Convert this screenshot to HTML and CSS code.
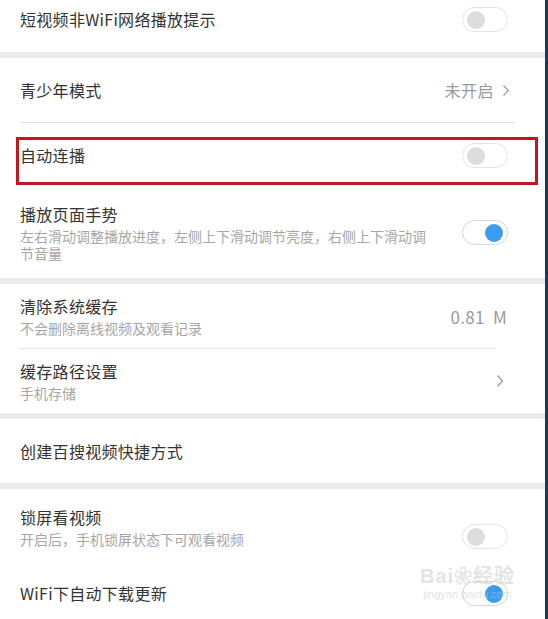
FILE: index.html
```html
<!DOCTYPE html>
<html lang="zh-CN">
<head>
  <meta charset="UTF-8">
  <title>设置</title>
  <link rel="stylesheet" href="styles.css">
</head>
<body>
  <div class="page">
    <div class="list">

      <!-- 播放提示 -->
      <div class="row first">
        <div class="text"><div class="title">短视频非WiFi网络播放提示</div></div>
        <span class="toggle"><span class="knob"></span></span>
      </div>

      <div class="band"></div>

      <div class="row">
        <div class="text"><div class="title">青少年模式</div></div>
        <span class="value">未开启<svg class="chev" width="8" height="13" viewBox="0 0 8 13"><polyline points="1.5,1.5 6.5,6.5 1.5,11.5" fill="none" stroke="#9a9a9a" stroke-width="1.2"/></svg></span>
      </div>
      <div class="line wide"></div>

      <div class="row mark">
        <div class="text"><div class="title">自动连播</div></div>
        <span class="toggle"><span class="knob"></span></span>
        <div class="redbox"></div>
      </div>

      <div class="row tall">
        <div class="text">
          <div class="title">播放页面手势</div>
          <div class="sub">左右滑动调整播放进度，左侧上下滑动调节亮度，右侧上下滑动调节音量</div>
        </div>
        <span class="toggle on"><span class="knob"></span></span>
      </div>

      <div class="band"></div>

      <!-- 缓存 -->
      <div class="row">
        <div class="text">
          <div class="title">清除系统缓存</div>
          <div class="sub">不会删除离线视频及观看记录</div>
        </div>
        <span class="value size">0.81&nbsp; M</span>
      </div>
      <div class="line short"></div>

      <div class="row">
        <div class="text">
          <div class="title">缓存路径设置</div>
          <div class="sub">手机存储</div>
        </div>
        <svg class="chev lone" width="8" height="14" viewBox="0 0 8 14"><polyline points="1.5,1.5 6.5,7 1.5,12.5" fill="none" stroke="#9a9a9a" stroke-width="1.2"/></svg>
      </div>

      <div class="band"></div>

      <div class="row">
        <div class="text"><div class="title">创建百搜视频快捷方式</div></div>
      </div>

      <div class="band"></div>

      <div class="row lock">
        <div class="text">
          <div class="title">锁屏看视频</div>
          <div class="sub">开启后，手机锁屏状态下可观看视频</div>
        </div>
        <span class="toggle low"><span class="knob"></span></span>
      </div>

      <div class="row last">
        <div class="text"><div class="title">WiFi下自动下载更新</div></div>
        <span class="toggle on"><span class="knob"></span></span>
        <div class="watermark">
          <div class="wm-top">Bai<span class="paw">❀</span>经验</div>
          <div class="wm-bottom">jingyan.baidu.com</div>
        </div>
      </div>

    </div>
  </div>
</body>
</html>
```

FILE: styles.css
```css
html, body { margin: 0; padding: 0; background: #fff; }
body { font-family: "Noto Sans CJK SC", "Noto Sans", sans-serif; color: #333; }

.page { width: 548px; height: 619px; overflow: hidden; box-sizing: border-box; border-right: 3px solid #1c3764; }
.list { margin-top: -14px; }

.row { position: relative; display: flex; align-items: center; height: 64px; padding: 0 37px 0 20px; box-sizing: border-box; }
.row.first { height: 66px; }
.row.tall { height: 91px; }
.row.lock { height: 74px; align-items: flex-start; padding-top: 17px; }
.row.last { height: 60px; }

.text { flex: 1; min-width: 0; }
.title { font-size: 16px; line-height: 22px; color: #333; letter-spacing: 0.3px; }
.sub { font-size: 14px; line-height: 17px; margin-top: 3px; color: #a6a6a6; width: 416px; }

.band { height: 6px; background: #ebebeb; }
.list > .band:first-of-type { height: 7px; }
.line { height: 1px; background: #e2e2e2; margin-left: 20px; }
.line.wide { margin-right: 30px; }
.line.short { margin-right: 49px; }

.value { font-size: 16px; color: #9a9a9a; display: flex; align-items: center; gap: 8px; margin-right: -2px; letter-spacing: 0.5px; }
.value.size { font-size: 17px; letter-spacing: 0.3px; margin-right: 1px; }
.chev.lone { margin-right: 4px; }

.toggle { position: relative; flex: none; width: 46px; height: 25px; box-sizing: border-box; border: 1px solid #e3e3e3; border-radius: 13px; background: #fff; }
.toggle .knob { position: absolute; top: 3px; left: 4px; width: 18px; height: 18px; border-radius: 50%; background: #dcdcdc; }
.toggle.on { border-color: #cbd6e2; }
.toggle.on .knob { left: auto; right: 4px; background: #3d9bef; }
.toggle.low { margin-top: 18px; }

.redbox { position: absolute; left: 16px; top: 14px; width: 522px; height: 48px; box-sizing: border-box; border: 3px solid #c5161d; }

.watermark { position: absolute; left: 420px; top: 2px; color: rgba(200, 200, 200, 0.5); text-align: center; pointer-events: none; }
.wm-top { font-family: "Liberation Sans", sans-serif; font-size: 20px; font-weight: bold; line-height: 22px; letter-spacing: 1px; }
.paw { font-size: 18px; }
.wm-bottom { font-family: "Liberation Sans", sans-serif; font-size: 11px; line-height: 12px; }
```
